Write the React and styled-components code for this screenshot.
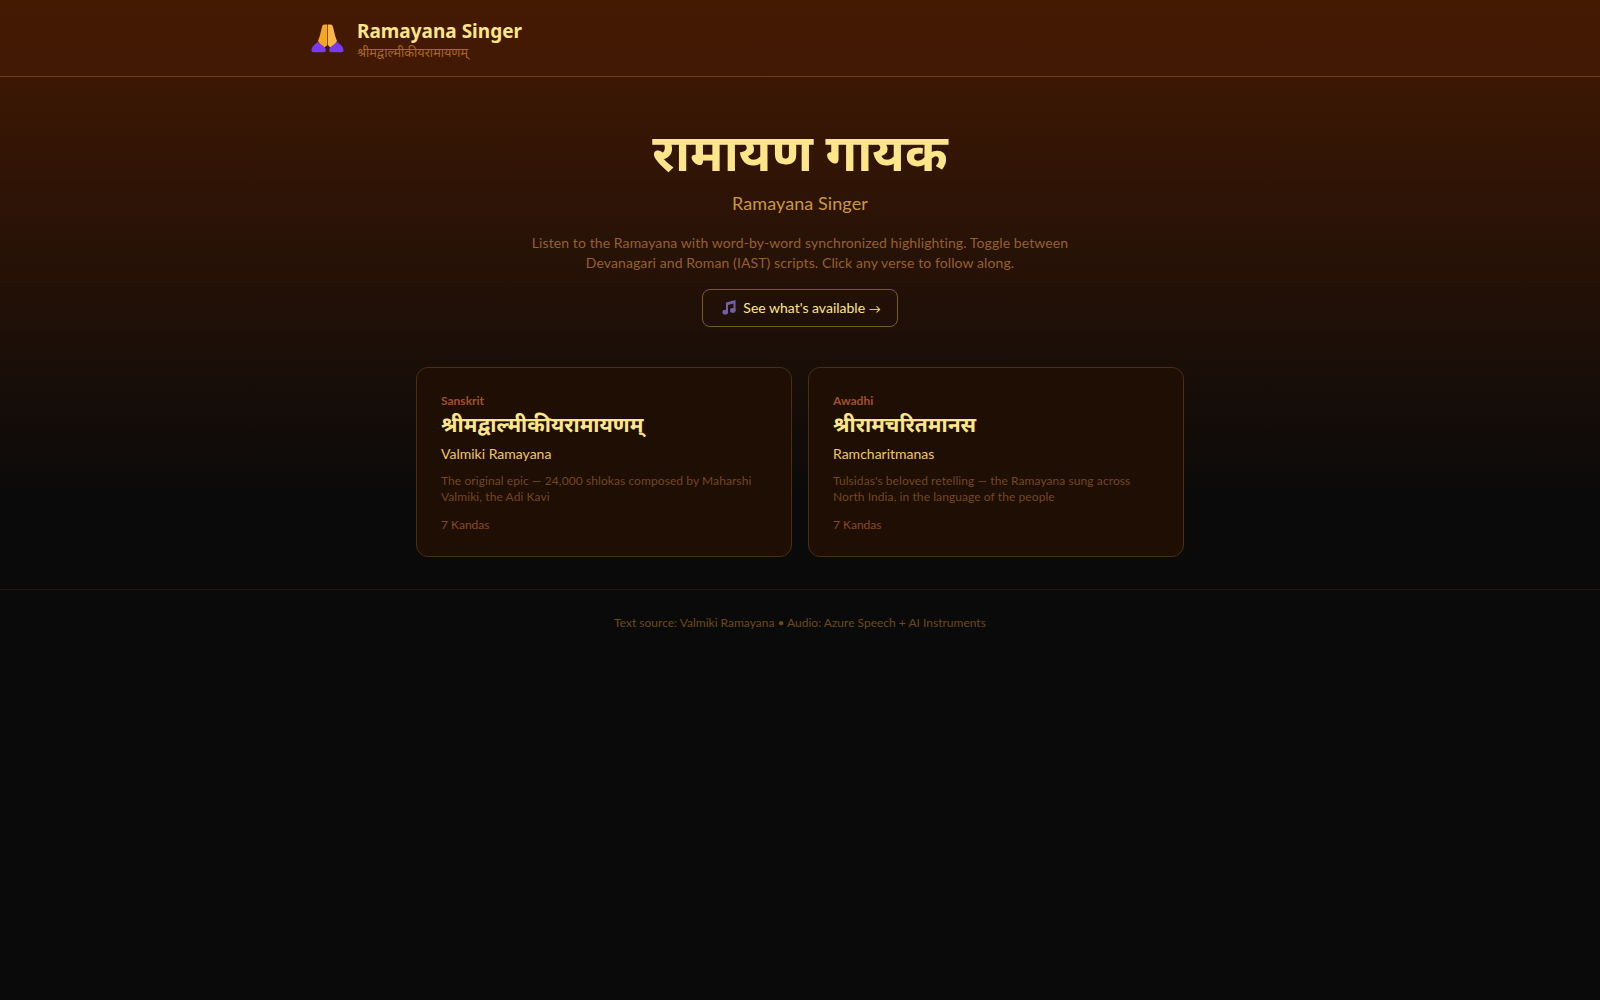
import React from 'react';
import styled, { createGlobalStyle } from 'styled-components';

const Global = createGlobalStyle`
  * { box-sizing: border-box; }
  html, body { margin: 0; padding: 0; background: #0a0a0a; }
  body { font-family: "Lato", "Noto Sans", sans-serif; }
`;

const Page = styled.div`
  min-height: 1000px;
  background: linear-gradient(to bottom, #451a03 0%, #0a0a0a 50%);
`;

const Header = styled.header`
  height: 77px;
  background: rgba(69, 26, 3, 0.5);
  border-bottom: 1px solid #6b3f12;
`;

const HeaderInner = styled.div`
  max-width: 1024px;
  height: 100%;
  margin: 0 auto;
  padding: 0 24px;
  display: flex;
  align-items: center;
  gap: 13px;
`;

const BrandTitle = styled.div`
  font-family: "Noto Sans", sans-serif;
  font-size: 19px;
  line-height: 28px;
  font-weight: 700;
  color: #fde68a;
`;

const BrandSub = styled.div`
  font-size: 12.700px;
  line-height: 14px;
  color: #a86a20;
`;

const Hero = styled.section`
  padding-top: 48px;
  display: flex;
  flex-direction: column;
  align-items: center;
  text-align: center;
`;

const HeroTitle = styled.h1`
  margin: 0 0 4px;
  font-size: 51.500px;
  line-height: 52px;
  font-weight: 700;
  color: #fde68a;
`;

const HeroSub = styled.div`
  margin-top: 8px;
  font-size: 18px;
  line-height: 28px;
  letter-spacing: 0.08px;
  color: #c9973f;
`;

const HeroText = styled.p`
  margin: 16px 0 0;
  max-width: 576px;
  font-size: 14px;
  line-height: 20px;
  letter-spacing: 0.1px;
  color: #96602a;
`;

const Pill = styled.a`
  margin-top: 16px;
  height: 38px;
  padding: 0 16px 2px 18px;
  display: inline-flex;
  align-items: center;
  gap: 6px;
  border: 1px solid #7a5a20;
  border-radius: 8px;
  font-size: 14px;
  color: #fde68a;
`;

const Arrow = styled.span`
  font-size: 12px;
`;

const Cards = styled.div`
  width: 768px;
  margin: 40px auto 0;
  display: grid;
  grid-template-columns: 1fr 1fr;
  gap: 16px;
`;

const Card = styled.article`
  height: 190px;
  padding: 25px 24px 24px;
  background: #1e0e04;
  border: 1px solid #4a3010;
  border-radius: 12px;
`;

const Lang = styled.div`
  font-size: 12px;
  line-height: 16px;
  font-weight: 700;
  color: #a0522d;
`;

const CardTitle = styled.h2`
  margin: 0;
  font-size: 21px;
  line-height: 29px;
  font-weight: 700;
  color: #fde68a;
`;

const CardName = styled.div`
  margin-top: 6px;
  font-size: 14px;
  line-height: 20px;
  color: #f0c860;
`;

const CardText = styled.p`
  margin: 9px 0 0;
  font-size: 12px;
  line-height: 16px;
  letter-spacing: 0.08px;
  color: #75481a;
`;

const CardMeta = styled.div`
  margin-top: 12px;
  font-size: 12px;
  line-height: 16px;
  color: #8a4a1e;
`;

const Footer = styled.footer`
  margin-top: 32px;
  padding-top: 25px;
  border-top: 1px solid #24180c;
  text-align: center;
  font-size: 12px;
  line-height: 16px;
  color: #6b4a1a;
`;

const NamasteSvg = styled.svg`
  margin-left: -1px;
  flex: none;
`;

const Namaste = () => (
  <NamasteSvg width="33" height="32" viewBox="0 0 33 32" aria-hidden="true">
    <path d="M16.200 2.500h-2.700c-1.400 0-2.200 1-2.500 2.500L8.800 14 7 19l3 5 3 2 3.200-3z" fill="#f5a623" />
    <path d="M16.800 2.500h2.700c1.400 0 2.200 1 2.500 2.500l2.200 9 1.800 5-3 5-3 2-3.200-3z" fill="#fdb64a" />
    <path d="M7 20C3.500 22 .5 25 .5 28.500c0 1 .8 1.700 2 1.700H12.500c1.500 0 2.300-.9 2.300-2 0-1.800-1-3-2.600-4.200z" fill="#7c3aed" />
    <path d="M26 20c3.500 2 6.500 5 6.500 8.500 0 1-.8 1.700-2 1.700H20.500c-1.500 0-2.300-.9-2.300-2 0-1.800 1-3 2.600-4.200z" fill="#7c3aed" />
  </NamasteSvg>
);

const Note = () => (
  <svg width="16" height="16" viewBox="0 0 16 16" aria-hidden="true">
    <path d="M5 3.500 14.500 1v10.500h-2V4.500L7 6v7.500H5z" fill="#7260a8" />
    <ellipse cx="4.300" cy="13.200" rx="2.800" ry="2.400" fill="#7260a8" />
    <ellipse cx="11.800" cy="11.400" rx="2.800" ry="2.400" fill="#7260a8" />
  </svg>
);

const texts = [
  {
    lang: 'Sanskrit',
    title: 'श्रीमद्वाल्मीकीयरामायणम्',
    name: 'Valmiki Ramayana',
    text: 'The original epic — 24,000 shlokas composed by Maharshi Valmiki, the Adi Kavi',
  },
  {
    lang: 'Awadhi',
    title: 'श्रीरामचरितमानस',
    name: 'Ramcharitmanas',
    text: "Tulsidas's beloved retelling — the Ramayana sung across North India, in the language of the people",
  },
];

export default function App() {
  return (
    <Page>
      <Global />
      <Header>
        <HeaderInner>
          <Namaste />
          <div>
            <BrandTitle>Ramayana Singer</BrandTitle>
            <BrandSub>श्रीमद्वाल्मीकीयरामायणम्</BrandSub>
          </div>
        </HeaderInner>
      </Header>
      <Hero>
        <HeroTitle>रामायण गायक</HeroTitle>
        <HeroSub>Ramayana Singer</HeroSub>
        <HeroText>
          Listen to the Ramayana with word-by-word synchronized highlighting. Toggle between
          Devanagari and Roman (IAST) scripts. Click any verse to follow along.
        </HeroText>
        <Pill>
          <Note />
          <span>See what's available <Arrow>→</Arrow></span>
        </Pill>
      </Hero>
      <Cards>
        {texts.map((t) => (
          <Card key={t.lang}>
            <Lang>{t.lang}</Lang>
            <CardTitle>{t.title}</CardTitle>
            <CardName>{t.name}</CardName>
            <CardText>{t.text}</CardText>
            <CardMeta>7 Kandas</CardMeta>
          </Card>
        ))}
      </Cards>
      <Footer>Text source: Valmiki Ramayana • Audio: Azure Speech + AI Instruments</Footer>
    </Page>
  );
}
